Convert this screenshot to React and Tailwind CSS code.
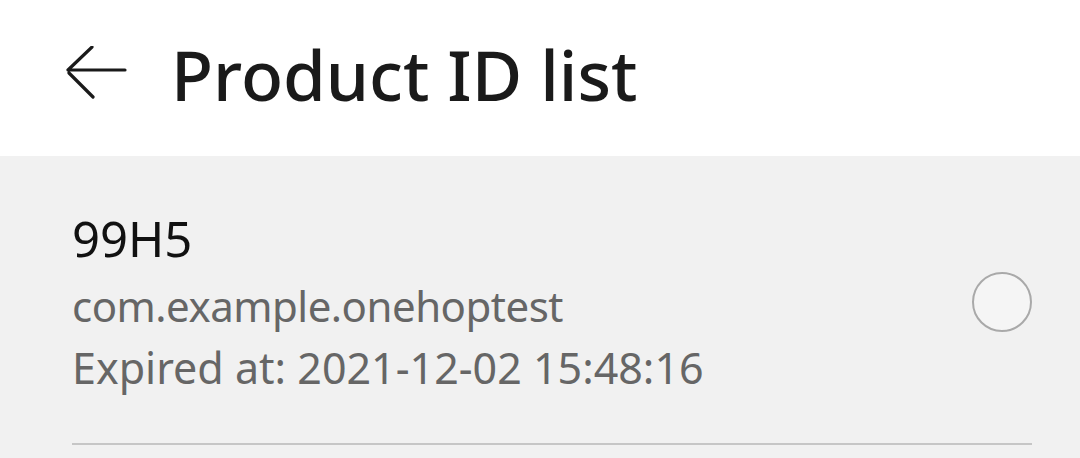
import React from "react";

const App = () => {
  return (
    <div className="w-[1080px] h-[458px] overflow-hidden bg-[#f1f1f1] font-['Noto_Sans',sans-serif]">
      <header className="h-[156px] bg-white flex items-center">
        <svg width="66" height="56" viewBox="0 0 66 56" className="shrink-0 ml-[64px] -mt-[8px] text-[#1a1a1a]">
          <path
            d="M4 24h57M28 1L4 24M5 27l24 24"
            fill="none"
            stroke="currentColor"
            strokeWidth="3.2"
            strokeLinecap="round"
            strokeLinejoin="round"
          />
        </svg>
        <h1 className="ml-[41px] text-[69px] font-medium text-[#1a1a1a] leading-none -mt-[8px]">Product ID list</h1>
      </header>
      <div className="pl-[72px] pr-[48px] pt-[49px]">
        <div className="flex items-center pb-[44px]">
          <div className="flex-1 flex flex-col">
            <div className="text-[49px] leading-[66px] text-[#111]">99H5</div>
            <div className="mt-[4px] text-[42px] leading-[62px] text-[#666] tracking-[-0.5px]">com.example.onehoptest</div>
            <div className="text-[43px] leading-[62px] text-[#666]">Expired at: 2021-12-02 15:48:16</div>
          </div>
          <div className="w-[60px] h-[60px] rounded-full border-[2.5px] border-[#a9a9a9] bg-[#f5f5f5] shrink-0" />
        </div>
        <div className="h-[2px] bg-[#c6c6c6]" />
      </div>
    </div>
  );
};

export default App;
